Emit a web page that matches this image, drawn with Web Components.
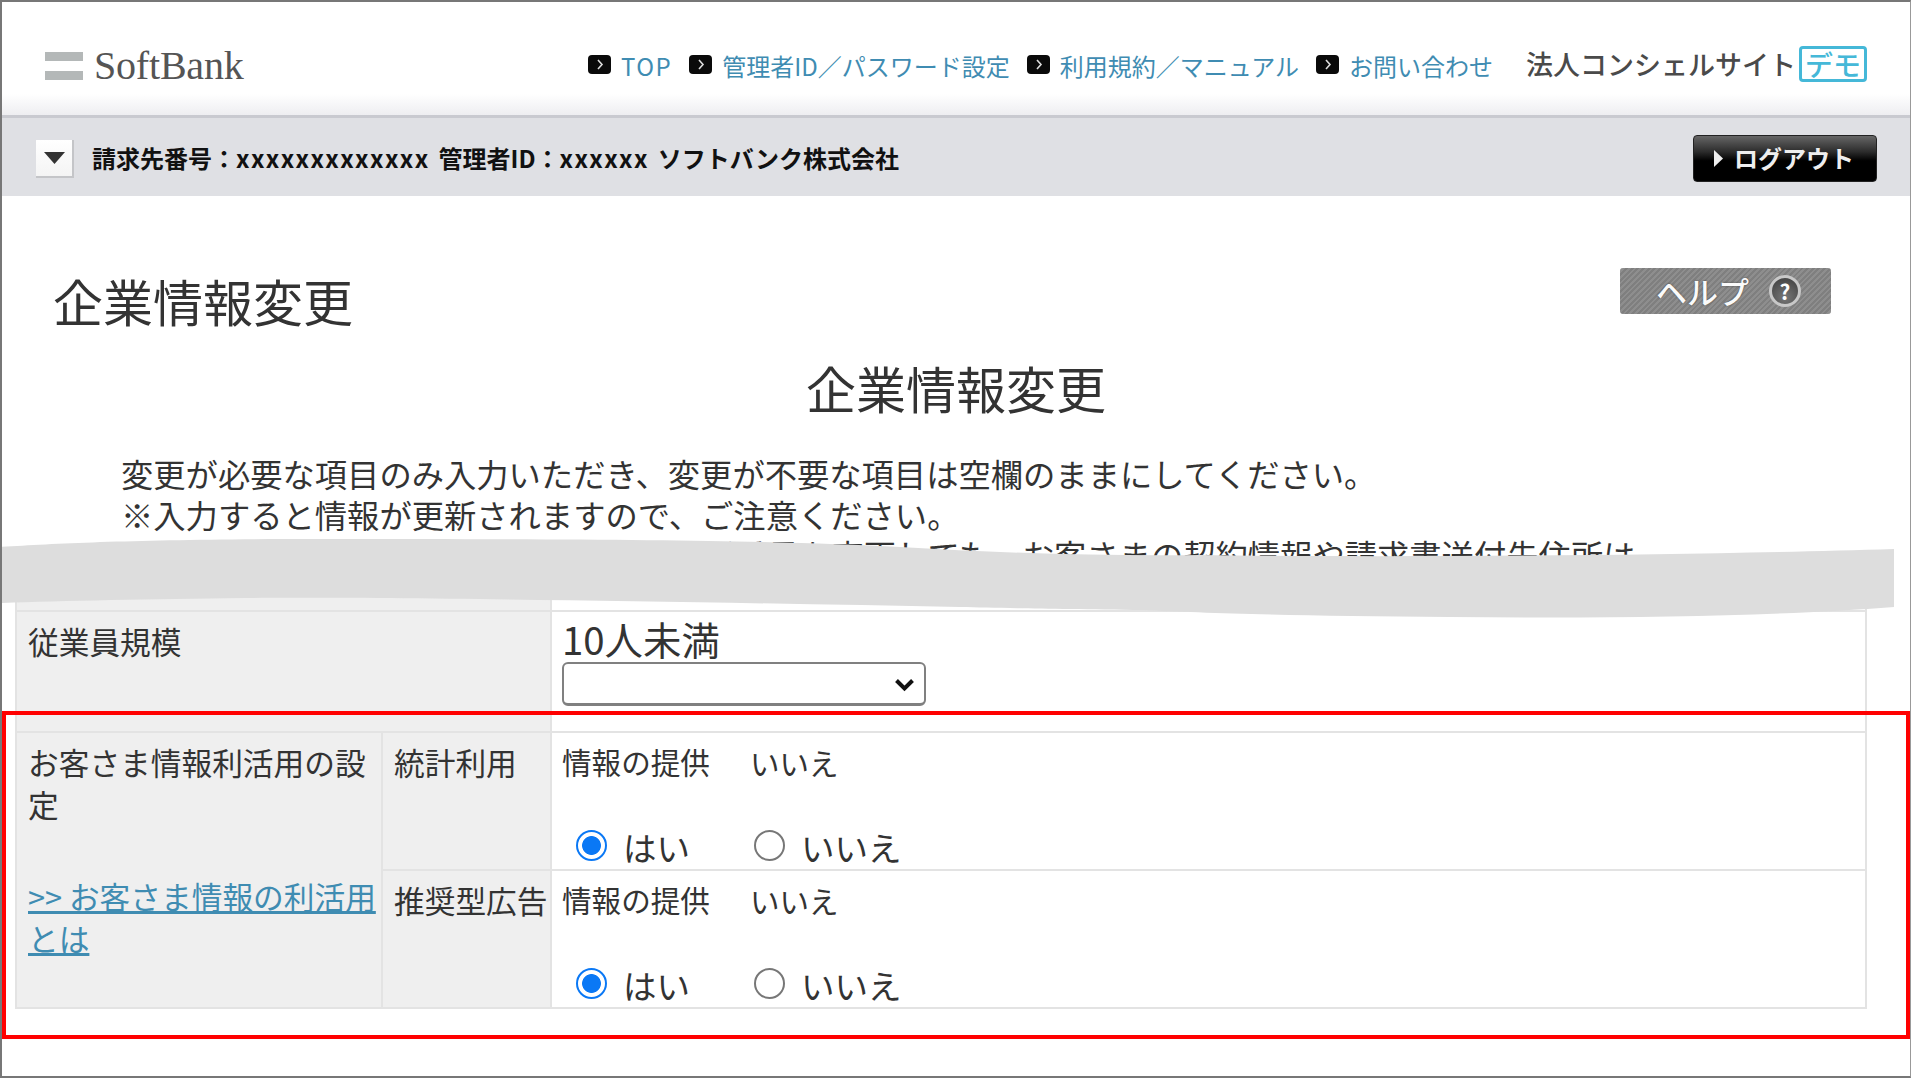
<!DOCTYPE html>
<html lang="ja">
<head>
<meta charset="utf-8">
<title>企業情報変更</title>
<style>
  html, body { margin: 0; padding: 0; background: #fff; }
  body { font-family: "Noto Sans CJK JP", "Noto Sans", sans-serif; color: #333; }
</style>
</head>
<body>
<sb-frame>
  <sb-header>
    <sb-nav-link style="letter-spacing: 1.5px">TOP</sb-nav-link>
    <sb-nav-link>管理者ID／パスワード設定</sb-nav-link>
    <sb-nav-link>利用規約／マニュアル</sb-nav-link>
    <sb-nav-link>お問い合わせ</sb-nav-link>
  </sb-header>
  <sb-account-bar>請求先番号：<i>xxxxxxxxxxxxx</i> 管理者ID：<i>xxxxxx</i> ソフトバンク株式会社</sb-account-bar>
  <sb-page-head title-text="企業情報変更"></sb-page-head>
  <sb-notice>
    <span>変更が必要な項目のみ入力いただき、変更が不要な項目は空欄のままにしてください。</span>
    <span>※入力すると情報が更新されますので、ご注意ください。</span>
    <span>※こちらの画面でご登録の住所や代表電話番号を変更しても、お客さまの契約情報や請求書送付先住所は</span>
  </sb-notice>
  <sb-form-table>
    <sb-cell head style="grid-column: 1 / 3; height: 15px"></sb-cell>
    <sb-cell></sb-cell>

    <sb-cell head style="grid-column: 1 / 3; height: 119px">従業員規模</sb-cell>
    <sb-cell value>
      <sb-select current="10人未満"></sb-select>
    </sb-cell>

    <sb-cell head style="grid-row: span 2">
      お客さま情報利活用の設定
      <a slot="link" href="#">&gt;&gt; お客さま情報の利活用とは</a>
    </sb-cell>
    <sb-cell head style="height: 136px">統計利用</sb-cell>
    <sb-cell value><sb-consent name="stat"></sb-consent></sb-cell>
    <sb-cell head style="height: 136px">推奨型広告</sb-cell>
    <sb-cell value><sb-consent name="ads"></sb-consent></sb-cell>
  </sb-form-table>
  <sb-tear></sb-tear>
  <sb-callout></sb-callout>
</sb-frame>

<script>
// small helper, every element here is just a template + open shadow root
function shadowFrom(el, html) {
  const shadow = el.attachShadow({ mode: 'open' });
  shadow.innerHTML = html;
  return shadow;
}

class SbFrame extends HTMLElement {
  constructor() {
    super();
    shadowFrom(this, `
      <style>
        :host {
          display: block;
          position: relative;
          box-sizing: border-box;
          width: 1911px;
          height: 1078px;
          overflow: hidden;
          background: #fff;
          border-top: 2px solid #777;
          border-left: 2px solid #777;
          border-right: 1px solid #999;
          border-bottom: 2px solid #777;
        }
      </style>
      <slot></slot>
    `);
  }
}

class SbHeader extends HTMLElement {
  constructor() {
    super();
    shadowFrom(this, `
      <style>
        :host {
          display: flex;
          align-items: center;
          box-sizing: border-box;
          height: 116px;
          padding: 14px 43px 0 43px;
          border-bottom: 3px solid #c9cad0;
          background: linear-gradient(#fff 0, #fff 92px, #eeeef1 113px);
        }
        .logo { display: flex; align-items: center; gap: 11px; }
        .bars { display: flex; flex-direction: column; gap: 10px; }
        .bars i { display: block; width: 38px; height: 9px; background: #b4b8b8; }
        .word {
          font: 40px "Liberation Serif", serif;
          letter-spacing: -0.2px;
          color: #555;
          line-height: 40px;
        }
        nav { display: flex; align-items: center; margin-left: auto; gap: 17px; }
        .site {
          display: flex;
          align-items: center;
          margin-left: 33px;
          margin-top: -3px;
          font-size: 27px;
          font-weight: 500;
          color: #4a4a4a;
          line-height: 36px;
        }
        .demo {
          box-sizing: border-box;
          display: flex;
          align-items: center;
          justify-content: center;
          width: 68px;
          height: 36px;
          margin-left: 3px;
          border: 3px solid #45b8d8;
          border-radius: 4px;
          color: #45b8d8;
          font-size: 28px;
          font-weight: 500;
          line-height: 30px;
        }
      </style>
      <div class="logo">
        <div class="bars"><i></i><i></i></div>
        <span class="word">SoftBank</span>
      </div>
      <nav><slot></slot></nav>
      <div class="site">法人コンシェルサイト<span class="demo">デモ</span></div>
    `);
  }
}

class SbNavLink extends HTMLElement {
  constructor() {
    super();
    shadowFrom(this, `
      <style>
        :host {
          display: inline-flex;
          align-items: center;
          gap: 10px;
          font-size: 24px;
          color: #3f8cb2;
          line-height: 32px;
        }
        svg { display: block; margin-top: -3px; }
      </style>
      <svg width="23" height="19" viewBox="0 0 23 19">
        <rect width="23" height="19" rx="4" fill="#0a0a0a"/>
        <path d="M10 5l4 4.5-4 4.5" fill="none" stroke="#ddd" stroke-width="1.6"/>
      </svg>
      <span><slot></slot></span>
    `);
  }
}

class SbAccountBar extends HTMLElement {
  constructor() {
    super();
    shadowFrom(this, `
      <style>
        :host {
          display: flex;
          align-items: center;
          box-sizing: border-box;
          height: 78px;
          padding: 0 33px 0 34px;
          background: #dfe0e4;
        }
        .toggle {
          display: flex;
          align-items: center;
          justify-content: center;
          box-sizing: border-box;
          width: 38px;
          height: 38px;
          margin-top: 3px;
          background: linear-gradient(#fff, #f4f4f4);
          border-right: 2px solid #c4c5c8;
          border-bottom: 2px solid #c4c5c8;
        }
        .info {
          margin-left: 18px;
          font-size: 24px;
          font-weight: 700;
          color: #111;
          word-spacing: 3.5px;
        }
        ::slotted(i) { font-style: normal; letter-spacing: 1.4px; }
        .logout {
          display: flex;
          align-items: center;
          box-sizing: border-box;
          width: 184px;
          height: 47px;
          margin: 2px 0 0 auto;
          padding-left: 20px;
          gap: 11px;
          border: 1px solid #222;
          border-radius: 4px;
          background: linear-gradient(#666 0, #2c2c2c 35%, #000 55%, #000 100%);
          color: #eee;
          font-size: 24px;
          font-weight: 700;
          line-height: 30px;
        }
      </style>
      <div class="toggle">
        <svg width="21" height="12" viewBox="0 0 21 12"><path d="M0 0h21L10.5 12z" fill="#333"/></svg>
      </div>
      <div class="info"><slot></slot></div>
      <div class="logout">
        <svg width="9" height="17" viewBox="0 0 9 17"><path d="M0 0l9 8.5L0 17z" fill="#eee"/></svg>
        <span>ログアウト</span>
      </div>
    `);
  }
}

class SbPageHead extends HTMLElement {
  constructor() {
    super();
    const text = this.getAttribute('title-text');
    shadowFrom(this, `
      <style>
        :host { display: block; padding-top: 72px; color: #333; }
        .top {
          display: flex;
          align-items: flex-start;
          justify-content: space-between;
          height: 64px;
          padding: 0 79px 0 51px;
        }
        h1, h2 { margin: 0; font-size: 50px; font-weight: 400; line-height: 60px; }
        h1 { padding-top: 2px; }
        h2 { margin-top: 25px; text-align: center; }
        .help {
          display: flex;
          align-items: center;
          box-sizing: border-box;
          width: 211px;
          height: 46px;
          padding-left: 36px;
          gap: 20px;
          border-radius: 3px;
          background: repeating-linear-gradient(135deg, #7f7f7f 0 2px, #8e8e8e 2px 4px);
          color: #fafafa;
          font-size: 31px;
          font-weight: 500;
          line-height: 34px;
          text-shadow: 0 0 2px #444;
        }
        .q {
          display: flex;
          align-items: center;
          justify-content: center;
          box-sizing: border-box;
          width: 32px;
          height: 32px;
          border: 3px solid #c8c8c8;
          border-radius: 50%;
          background: radial-gradient(circle at 50% 75%, #777, #3c3c3c);
          font-size: 21px;
          font-weight: 700;
          line-height: 1;
          color: #fff;
          text-shadow: none;
        }
      </style>
      <div class="top">
        <h1>${text}</h1>
        <div class="help"><span>ヘルプ</span><span class="q">?</span></div>
      </div>
      <h2>${text}</h2>
    `);
  }
}

class SbNotice extends HTMLElement {
  constructor() {
    super();
    shadowFrom(this, `
      <style>
        :host {
          display: block;
          margin-top: 36px;
          padding-left: 119px;
          font-size: 32.3px;
          line-height: 40.5px;
          color: #333;
        }
        ::slotted(span) { display: block; white-space: nowrap; }
      </style>
      <slot></slot>
    `);
  }
}

class SbFormTable extends HTMLElement {
  constructor() {
    super();
    shadowFrom(this, `
      <style>
        :host {
          display: grid;
          grid-template-columns: 364px 167px 1313px;
          gap: 2px;
          box-sizing: border-box;
          width: 1852px;
          margin: 20px 0 0 13px;
          padding: 0 2px 2px;
          background: #e3e3e3;
        }
      </style>
      <slot></slot>
    `);
  }
}

class SbCell extends HTMLElement {
  constructor() {
    super();
    shadowFrom(this, `
      <style>
        :host {
          display: block;
          box-sizing: border-box;
          min-width: 0;
          background: #fff;
          font-size: 30.7px;
          line-height: 42px;
          color: #333;
        }
        :host([head]) { background: #efefef; }
        .pad { padding: 8px 0 0 11px; }
        :host([value]) .pad { padding: 8px 10px 0 10px; }
        :host(:empty) .pad { padding: 0; }
        ::slotted(a) {
          display: block;
          margin-top: 50px;
          margin-right: 2px;
          color: #3f8cb2;
        }
      </style>
      <div class="pad"><slot></slot><slot name="link"></slot></div>
    `);
  }
}

class SbSelect extends HTMLElement {
  constructor() {
    super();
    shadowFrom(this, `
      <style>
        :host { display: block; }
        .now { height: 42px; font-size: 38.4px; line-height: 36px; color: #333; }
        .box { position: relative; width: 364px; height: 44px; }
        select {
          display: block;
          box-sizing: border-box;
          width: 100%;
          height: 100%;
          appearance: none;
          border: 2px solid #808080;
          border-bottom-width: 3px;
          border-radius: 6px;
          background: #fff;
        }
        svg { position: absolute; right: 11px; top: 16px; pointer-events: none; }
      </style>
      <div class="now">${this.getAttribute('current')}</div>
      <div class="box">
        <select><option></option></select>
        <svg width="21" height="14" viewBox="0 0 21 14">
          <path d="M2.5 2.5l8 8 8-8" fill="none" stroke="#111" stroke-width="4"/>
        </svg>
      </div>
    `);
  }
}

class SbConsent extends HTMLElement {
  constructor() {
    super();
    const name = this.getAttribute('name');
    shadowFrom(this, `
      <style>
        :host { display: block; }
        .now { display: flex; line-height: 42px; }
        .now b { width: 188px; font-weight: 400; font-size: 29.6px; }
        .now span { font-size: 29.5px; }
        .opts { display: flex; margin: 43px 0 0 14px; line-height: 42px; font-size: 33.5px; }
        label { display: flex; align-items: center; width: 178px; gap: 16px; }
        input {
          appearance: none;
          box-sizing: border-box;
          width: 31px;
          height: 31px;
          margin: -2px 0 0;
          border: 2.5px solid #777;
          border-radius: 50%;
          background: #fff;
        }
        input:checked {
          border-color: #0a78f5;
          background: radial-gradient(circle, #0a78f5 0 9px, #fff 9.8px);
        }
      </style>
      <div class="now"><b>情報の提供</b><span>いいえ</span></div>
      <div class="opts">
        <label><input type="radio" name="${name}" checked>はい</label>
        <label><input type="radio" name="${name}">いいえ</label>
      </div>
    `);
  }
}

// the torn-paper strip that hides the skipped part of the page
class SbTear extends HTMLElement {
  constructor() {
    super();
    shadowFrom(this, `
      <style>
        :host { position: absolute; left: -2px; top: 534px; display: block; width: 1896px; height: 90px; }
        svg { display: block; }
      </style>
      <svg width="1896" height="90" viewBox="0 0 1896 90">
        <path d="M0 11 C60 7 150 3 320 3 C600 3 780 4 900 11 C1000 17 1100 20 1200 19 C1400 22 1700 19 1894 13
                 L1894 71 C1780 80 1620 83 1450 81 C1300 80 1200 77 1144 74 C1050 73 1000 72 960 71 C700 66 400 61 245 62 C150 63 60 65 0 67 Z" fill="#ddd"/>
      </svg>
    `);
  }
}

// red annotation box around the two consent rows
class SbCallout extends HTMLElement {
  constructor() {
    super();
    shadowFrom(this, `
      <style>
        :host {
          position: absolute;
          left: 0;
          top: 709px;
          display: block;
          box-sizing: border-box;
          width: 1908px;
          height: 328px;
          border: 4px solid #f00;
          pointer-events: none;
        }
      </style>
    `);
  }
}

customElements.define('sb-frame', SbFrame);
customElements.define('sb-header', SbHeader);
customElements.define('sb-nav-link', SbNavLink);
customElements.define('sb-account-bar', SbAccountBar);
customElements.define('sb-page-head', SbPageHead);
customElements.define('sb-notice', SbNotice);
customElements.define('sb-form-table', SbFormTable);
customElements.define('sb-cell', SbCell);
customElements.define('sb-select', SbSelect);
customElements.define('sb-consent', SbConsent);
customElements.define('sb-tear', SbTear);
customElements.define('sb-callout', SbCallout);
</script>
</body>
</html>
